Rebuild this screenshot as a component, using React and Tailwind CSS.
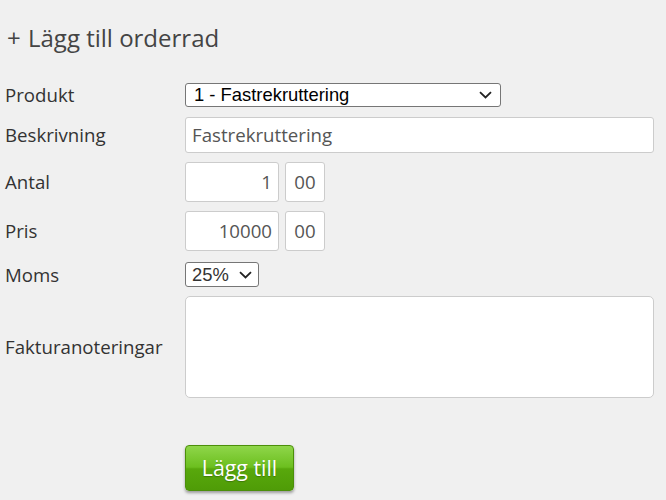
export default function App() {
  return (
    <div className="min-h-[500px] w-[666px] bg-[#f0f0f0] pl-[5px] font-['Open_Sans',sans-serif] text-[#333]">
      <h2 className="flex pt-[22px] pl-[2px] text-[24px] leading-[32px] text-[#444]">
        <span className="w-[21px]">+</span>
        <span>Lägg till orderrad</span>
      </h2>

      <div className="mt-[29px] flex flex-col">
        <div className="flex h-[24px] items-center">
          <label className="w-[180px] text-[18.67px]">Produkt</label>
          <div className="flex h-[24px] w-[316px] items-center justify-between rounded-[3px] border border-[#767676] bg-white pr-[8px] pl-[8px] font-['Liberation_Sans',sans-serif] text-[18.4px] text-black">
            <span>1 - Fastrekruttering</span>
            <Chevron />
          </div>
        </div>

        <div className="mt-[10px] flex items-center">
          <label className="w-[180px] text-[18.67px]">Beskrivning</label>
          <div className="flex h-[36px] w-[469px] items-center rounded-[3px] border border-[#ccc] bg-white px-[6px] text-[18.67px] text-[#555]">
            Fastrekruttering
          </div>
        </div>

        <div className="mt-[9px] flex items-center">
          <label className="w-[180px] text-[18.67px]">Antal</label>
          <div className="flex gap-[6px]">
            <div className="flex h-[40px] w-[94px] items-center justify-end rounded-[3px] border border-[#ccc] bg-white px-[6px] text-[18.67px] text-[#555]">1</div>
            <div className="flex h-[40px] w-[40px] items-center justify-center rounded-[3px] border border-[#ccc] bg-white text-[18.67px] text-[#555]">00</div>
          </div>
        </div>

        <div className="mt-[9px] flex items-center">
          <label className="w-[180px] text-[18.67px]">Pris</label>
          <div className="flex gap-[6px]">
            <div className="flex h-[40px] w-[94px] items-center justify-end rounded-[3px] border border-[#ccc] bg-white px-[6px] text-[18.67px] text-[#555]">10000</div>
            <div className="flex h-[40px] w-[40px] items-center justify-center rounded-[3px] border border-[#ccc] bg-white text-[18.67px] text-[#555]">00</div>
          </div>
        </div>

        <div className="mt-[11px] flex h-[25px] items-center">
          <label className="w-[180px] text-[18.67px]">Moms</label>
          <div className="flex h-[25px] w-[74px] items-center justify-between rounded-[3px] border border-[#767676] bg-white px-[6px] font-['Liberation_Sans',sans-serif] text-[18.4px] text-[#333]">
            <span>25%</span>
            <Chevron />
          </div>
        </div>

        <div className="mt-[9px] flex items-center">
          <label className="w-[180px] text-[18.67px]">Fakturanoteringar</label>
          <div className="h-[102px] w-[469px] rounded-[5px] border border-[#ccc] bg-white" />
        </div>
      </div>

      <div className="mt-[47px] pl-[180px]">
        <button className="h-[46px] w-[109px] rounded-[4px] border border-[#4c8f0a] bg-[linear-gradient(to_bottom,#8fd64a_0%,#6cbf1f_48%,#58a80c_52%,#4f9c07_100%)] text-[21.33px] text-white shadow-[0_2px_3px_rgba(0,0,0,0.35)] [text-shadow:0_1px_1px_rgba(0,0,0,0.25)]">
          Lägg till
        </button>
      </div>
    </div>
  );
}

function Chevron() {
  return (
    <svg width="13" height="8" viewBox="0 0 13 8" fill="none" stroke="#222" strokeWidth="1.8">
      <path d="M1 1.2l5.5 5.3L12 1.2" />
    </svg>
  );
}
